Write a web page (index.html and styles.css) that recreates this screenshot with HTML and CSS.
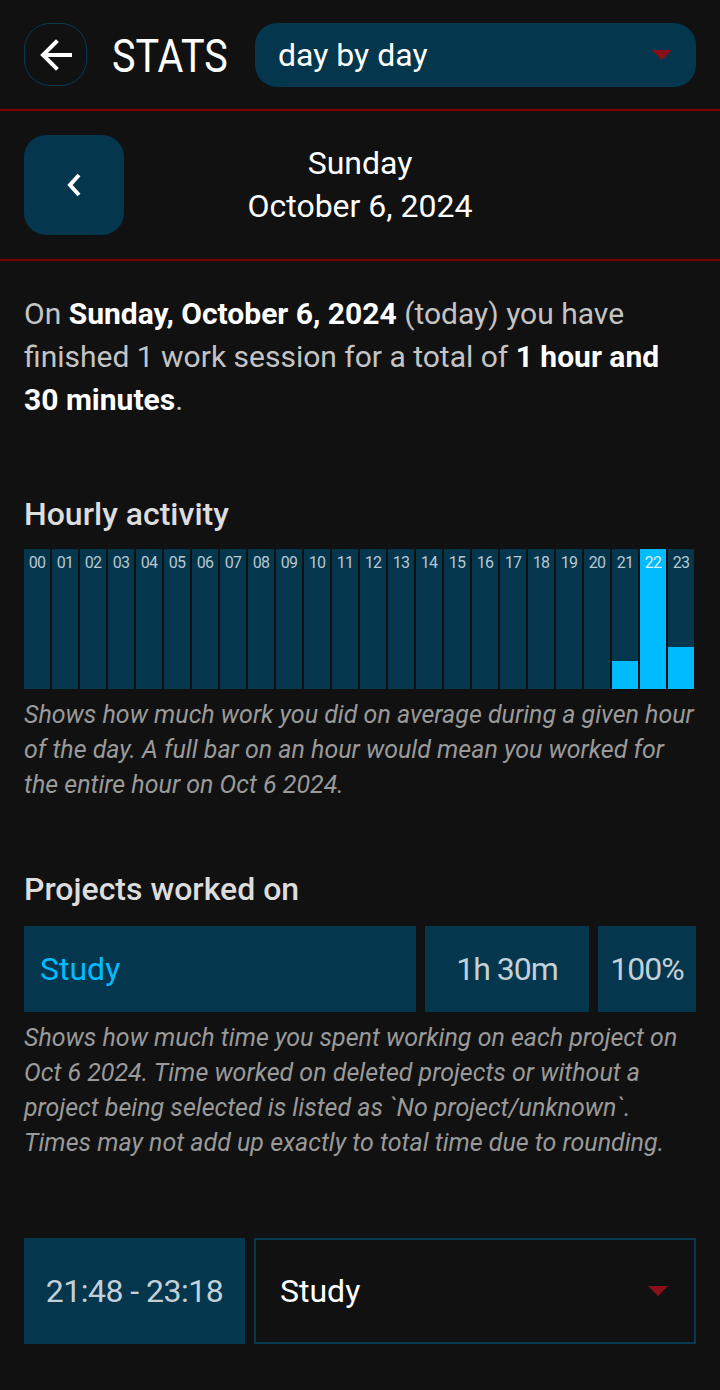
FILE: index.html
```html
<!DOCTYPE html>
<html lang="en">
<head>
  <meta charset="UTF-8">
  <meta name="viewport" content="width=device-width, initial-scale=1.0">
  <title>Stats - day by day</title>
  <link rel="stylesheet" href="styles.css">
</head>
<body>
  <div class="screen">
    <div class="topbar">
      <div class="back-btn">
        <svg viewBox="0 0 40 40" width="40" height="40">
          <path d="M34 20 H8 M20 7 L7 20 L20 33" fill="none" stroke="#fff" stroke-width="4" stroke-linecap="square"/>
        </svg>
      </div>
      <div class="title">STATS</div>
      <div class="mode-select">
        <span>day by day</span>
        <span class="caret"></span>
      </div>
    </div>

    <div class="date-nav">
      <div class="prev-btn">
        <svg viewBox="0 0 20 30" width="20" height="30">
          <path d="M15 5 L6 15 L15 25" fill="none" stroke="#fff" stroke-width="4"/>
        </svg>
      </div>
      <div class="date-label">
        <div>Sunday</div>
        <div>October 6, 2024</div>
      </div>
      <div class="spacer"></div>
    </div>

    <p class="summary">On <b>Sunday, October 6, 2024</b> (today) you have finished 1 work session for a total of <b>1 hour and 30&nbsp;minutes</b>.</p>

    <h3 class="section-title hourly-title">Hourly activity</h3>
    <div class="hours">
      <div class="hour"><span>00</span></div>
      <div class="hour"><span>01</span></div>
      <div class="hour"><span>02</span></div>
      <div class="hour"><span>03</span></div>
      <div class="hour"><span>04</span></div>
      <div class="hour"><span>05</span></div>
      <div class="hour"><span>06</span></div>
      <div class="hour"><span>07</span></div>
      <div class="hour"><span>08</span></div>
      <div class="hour"><span>09</span></div>
      <div class="hour"><span>10</span></div>
      <div class="hour"><span>11</span></div>
      <div class="hour"><span>12</span></div>
      <div class="hour"><span>13</span></div>
      <div class="hour"><span>14</span></div>
      <div class="hour"><span>15</span></div>
      <div class="hour"><span>16</span></div>
      <div class="hour"><span>17</span></div>
      <div class="hour"><span>18</span></div>
      <div class="hour"><span>19</span></div>
      <div class="hour"><span>20</span></div>
      <div class="hour"><span>21</span><div class="fill" style="height: 20%"></div></div>
      <div class="hour"><span class="on">22</span><div class="fill" style="height: 100%"></div></div>
      <div class="hour"><span>23</span><div class="fill" style="height: 30%"></div></div>
    </div>
    <p class="note">Shows how much work you did on average during a given hour of the day. A full bar on an hour would mean you worked for the entire hour on Oct 6 2024.</p>

    <h3 class="section-title projects-title">Projects worked on</h3>
    <div class="project-row">
      <div class="cell project-name">Study</div>
      <div class="cell project-time">1h 30m</div>
      <div class="cell project-pct">100%</div>
    </div>
    <p class="note">Shows how much time you spent working on each project on Oct 6 2024. Time worked on deleted projects or without a project being selected is listed as `No project/unknown`. Times may not add up exactly to total time due to rounding.</p>

    <div class="session-row">
      <div class="session-time">21:48 - 23:18</div>
      <div class="session-project">
        <span>Study</span>
        <span class="caret"></span>
      </div>
    </div>
  </div>
</body>
</html>
```

FILE: styles.css
```css
body {
  margin: 0;
  padding: 0;
  background-color: #111111;
  font-family: Roboto, 'Noto Sans', sans-serif;
  color: #fff;
}

.screen {
  width: 720px;
  min-height: 1390px;
  box-sizing: border-box;
}

/* top bar */
.topbar {
  display: flex;
  align-items: center;
  height: 111px;
  padding: 0 24px;
  box-sizing: border-box;
  border-bottom: 2px solid #7d0000;
}

.back-btn {
  width: 61px;
  height: 61px;
  border: 1px solid #063a52;
  border-radius: 26px;
  display: flex;
  align-items: center;
  justify-content: center;
  margin-right: 25px;
}

.title {
  width: 118px;
  font-size: 46px;
  white-space: nowrap;
  margin-right: 25px;
  margin-top: 2px;
  transform: scaleX(0.86);
  transform-origin: left center;
}

.mode-select {
  flex: 1;
  height: 64px;
  background-color: #04364d;
  border-radius: 22px;
  display: flex;
  align-items: center;
  justify-content: space-between;
  padding: 0 24px 0 23px;
  font-size: 32px;
}

.caret {
  width: 0;
  height: 0;
  border-left: 10px solid transparent;
  border-right: 10px solid transparent;
  border-top: 10px solid #8a0f18;
}

/* date navigation */
.date-nav {
  display: flex;
  align-items: center;
  height: 150px;
  padding: 0 24px;
  box-sizing: border-box;
  border-bottom: 2px solid #7d0000;
}

.prev-btn {
  width: 100px;
  height: 100px;
  background-color: #04364d;
  border-radius: 22px;
  display: flex;
  align-items: center;
  justify-content: center;
}

.date-label {
  flex: 1;
  text-align: center;
  font-size: 32px;
  line-height: 43px;
}

.spacer {
  width: 100px;
}

/* summary */
.summary {
  margin: 31px 24px 0;
  font-size: 30px;
  line-height: 43px;
  color: #c4c4c4;
}

.summary b {
  color: #fff;
  font-weight: 700;
}

.section-title {
  margin: 0 24px;
  font-size: 32px;
  font-weight: 500;
  color: #dddddd;
}

.hourly-title {
  margin-top: 74px;
  margin-bottom: 16px;
}

.projects-title {
  margin-top: 68px;
  margin-bottom: 18px;
}

/* hourly bars */
.hours {
  display: grid;
  grid-template-columns: repeat(24, 26px);
  gap: 2px;
  margin: 0 24px;
  height: 140px;
}

.hour {
  position: relative;
  background-color: #04364d;
  display: flex;
  flex-direction: column;
  justify-content: flex-end;
}

.hour span {
  position: absolute;
  top: 4px;
  left: 0;
  right: 0;
  text-align: center;
  font-size: 16px;
  color: #b8c8d2;
  letter-spacing: -0.8px;
  z-index: 1;
}

.hour span.on {
  color: #d7f3ff;
}

.fill {
  background-color: #00bbff;
}

.note {
  margin: 8px 24px 0;
  font-size: 25px;
  line-height: 35px;
  font-style: italic;
  color: #9a9a9a;
}

/* projects */
.project-row {
  display: flex;
  gap: 9px;
  margin: 0 24px;
  height: 86px;
}

.cell {
  background-color: #04364d;
  display: flex;
  align-items: center;
  font-size: 32px;
  color: #c3d0d8;
  letter-spacing: -1px;
}

.project-name {
  flex: 1;
  padding-left: 16px;
  color: #00bbff;
  letter-spacing: 0;
}

.project-time {
  width: 164px;
  justify-content: center;
}

.project-pct {
  width: 98px;
  justify-content: center;
}

/* session */
.session-row {
  display: flex;
  gap: 9px;
  margin: 78px 24px 0;
  height: 106px;
}

.session-time {
  width: 221px;
  background-color: #04364d;
  display: flex;
  align-items: center;
  justify-content: center;
  font-size: 32px;
  color: #c3d0d8;
  letter-spacing: -0.5px;
}

.session-project {
  flex: 1;
  border: 2px solid #063a52;
  display: flex;
  align-items: center;
  justify-content: space-between;
  padding: 0 26px 0 24px;
  font-size: 32px;
}
```
